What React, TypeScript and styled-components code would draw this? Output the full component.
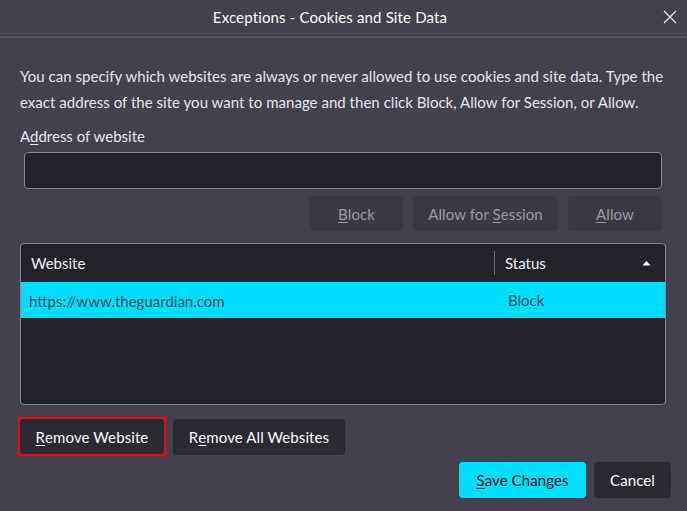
import React from "react";
import styled, { createGlobalStyle } from "styled-components";

const Global = createGlobalStyle`
  html, body { margin: 0; padding: 0; background: #42414d; }
  body { font-family: "Lato", "Liberation Sans", sans-serif; }
  * { box-sizing: border-box; }
`;

const Dialog = styled.div`
  width: 687px;
  height: 511px;
  background: #42414d;
  color: #fbfbfe;
  display: flex;
  flex-direction: column;
  overflow: hidden;
`;

const TitleBar = styled.div`
  height: 33px;
  display: flex;
  align-items: center;
  padding: 0 4px 0 3px;
  background: #42414d;
`;

const Title = styled.div`
  flex: 1;
  text-align: center;
  font-size: 15px;
  letter-spacing: 0.15px;
  color: #fbfbfe;
`;

const Close = styled.button`
  width: 26px;
  height: 26px;
  border: none;
  background: transparent;
  color: #e8e8ee;
  display: flex;
  align-items: center;
  justify-content: center;
  padding: 0;
`;

const Divider = styled.div`
  height: 5px;
  border-top: 1px solid #56555f;
  border-bottom: 2px solid #56555f;
  background: #3e3d48;
`;

const Body = styled.div`
  flex: 1;
  display: flex;
  flex-direction: column;
  padding: 25px 18px 0 20px;
`;

const Description = styled.p`
  margin: 0;
  font-size: 15px;
  line-height: 26px;
  color: #e6e6ec;
  letter-spacing: 0.03px;
`;

const Label = styled.label`
  margin-top: 11px;
  font-size: 15px;
  line-height: 20px;
  color: #e6e6ec;
`;

const U = styled.span`
  text-decoration: underline;
  text-underline-offset: 2px;
`;

const Input = styled.input`
  margin: 6px 7px 0 4px;
  height: 37px;
  background: #23222b;
  border: 1px solid #8a8a96;
  border-radius: 4px;
  color: #fbfbfe;
  font-size: 15px;
  outline: none;
`;

const ActionRow = styled.div`
  margin: 7px 7px 0 0;
  display: flex;
  justify-content: flex-end;
  gap: 10px;
`;

const Button = styled.button<{ $variant?: "disabled" | "primary" | "normal"; $w: number; $h?: number }>`
  width: ${(p) => p.$w}px;
  height: ${(p) => p.$h ?? 35}px;
  border: none;
  border-radius: 4px;
  font-family: "Lato", "Liberation Sans", sans-serif;
  font-size: 15px;
  letter-spacing: 0.1px;
  padding: 0;
  display: flex;
  align-items: center;
  justify-content: center;
  background: ${(p) =>
    p.$variant === "disabled" ? "#3b3a44" : p.$variant === "primary" ? "#00ddff" : "#2b2a33"};
  color: ${(p) =>
    p.$variant === "disabled" ? "#9a9aa4" : p.$variant === "primary" ? "#15141a" : "#fbfbfe"};
`;

const Table = styled.div`
  margin: 12px 3px 0 0;
  height: 162px;
  border: 1px solid #8a8a96;
  border-radius: 4px;
  background: #23222b;
  display: flex;
  flex-direction: column;
  overflow: hidden;
`;

const HeaderRow = styled.div`
  height: 38px;
  display: grid;
  grid-template-columns: 473px 1fr;
  align-items: center;
  font-size: 15px;
  color: #f0f0f4;
`;

const HeaderCell = styled.div<{ $divider?: boolean }>`
  height: 24px;
  display: flex;
  align-items: center;
  justify-content: space-between;
  padding: 0 14px 0 10px;
  border-left: ${(p) => (p.$divider ? "1px solid #6a6a74" : "none")};
`;

const DataRow = styled.div`
  height: 36px;
  display: grid;
  grid-template-columns: 474px 1fr;
  align-items: center;
  background: #00ddff;
  color: #15515f;
  font-size: 15px;
`;

const Cell = styled.div`
  padding-left: 8px;
  padding-top: 1px;
`;

const StatusCell = styled.div`
  padding-left: 13px;
`;

const Footer = styled.div`
  margin-top: 12px;
  display: flex;
  align-items: center;
  gap: 7px;
`;

const Highlight = styled.div`
  border: 2px solid #d0141e;
  box-shadow: 0 0 0 1px rgba(208, 20, 30, 0.45);
  margin-left: -2px;
  display: flex;
`;

const BottomRow = styled.div`
  margin-top: 6px;
  margin-right: -2px;
  display: flex;
  justify-content: flex-end;
  gap: 8px;
`;

const SortArrow = () => (
  <svg width="9" height="6" viewBox="0 0 9 6">
    <path d="M0.5 5.5 L4.5 1 L8.5 5.5 Z" fill="#fbfbfe" />
  </svg>
);

export default function App() {
  return (
    <>
      <Global />
      <Dialog>
        <TitleBar>
          <Title>Exceptions - Cookies and Site Data</Title>
          <Close aria-label="Close">
            <svg width="14" height="14" viewBox="0 0 14 14">
              <path d="M1 1 L13 13 M13 1 L1 13" stroke="#e8e8ee" strokeWidth="1.3" />
            </svg>
          </Close>
        </TitleBar>
        <Divider />
        <Body>
          <Description>
            You can specify which websites are always or never allowed to use cookies and site data. Type the exact
            address of the site you want to manage and then click Block, Allow for Session, or Allow.
          </Description>
          <Label>
            A<U>d</U>dress of website
          </Label>
          <Input />
          <ActionRow>
            <Button $variant="disabled" $w={93}>
              <U>B</U>lock
            </Button>
            <Button $variant="disabled" $w={145}>
              Allow for&nbsp;<U>S</U>ession
            </Button>
            <Button $variant="disabled" $w={94}>
              <U>A</U>llow
            </Button>
          </ActionRow>
          <Table>
            <HeaderRow>
              <HeaderCell>Website</HeaderCell>
              <HeaderCell $divider>
                Status
                <SortArrow />
              </HeaderCell>
            </HeaderRow>
            <DataRow>
              <Cell>https://www.theguardian.com</Cell>
              <StatusCell>Block</StatusCell>
            </DataRow>
          </Table>
          <Footer>
            <Highlight>
              <Button $w={144} $h={35}>
                <U>R</U>emove Website
              </Button>
            </Highlight>
            <Button $w={172} $h={36}>
              R<U>e</U>move All Websites
            </Button>
          </Footer>
          <BottomRow>
            <Button $variant="primary" $w={127} $h={36}>
              <U>S</U>ave Changes
            </Button>
            <Button $w={77} $h={36}>
              Cancel
            </Button>
          </BottomRow>
        </Body>
      </Dialog>
    </>
  );
}
